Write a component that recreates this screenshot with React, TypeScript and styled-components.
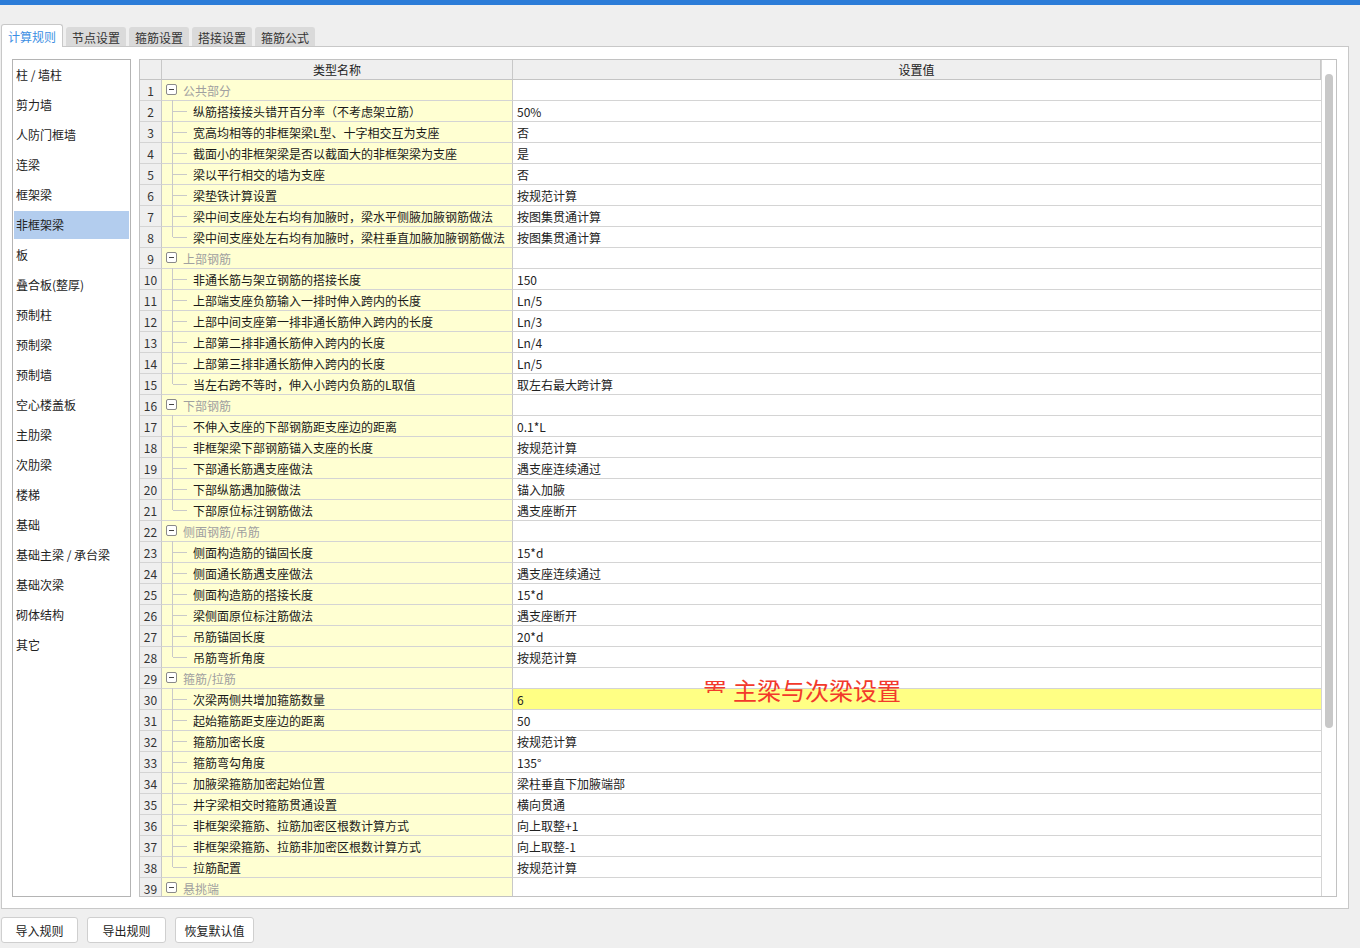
import React from 'react';
import styled, { createGlobalStyle } from 'styled-components';

const GlobalStyle = createGlobalStyle`
  html, body {
    margin: 0;
    padding: 0;
    background: #efefef;
    font-family: "Noto Sans CJK SC", "Noto Sans", sans-serif;
    font-size: 12px;
    color: #222;
  }
  * { box-sizing: border-box; }
`

type Row = { name: string; value?: string; group?: boolean; last?: boolean; hl?: boolean };

const rows: Row[] = [
  { name: '公共部分', group: true },
  { name: '纵筋搭接接头错开百分率（不考虑架立筋）', value: '50%' },
  { name: '宽高均相等的非框架梁L型、十字相交互为支座', value: '否' },
  { name: '截面小的非框架梁是否以截面大的非框架梁为支座', value: '是' },
  { name: '梁以平行相交的墙为支座', value: '否' },
  { name: '梁垫铁计算设置', value: '按规范计算' },
  { name: '梁中间支座处左右均有加腋时，梁水平侧腋加腋钢筋做法', value: '按图集贯通计算' },
  { name: '梁中间支座处左右均有加腋时，梁柱垂直加腋加腋钢筋做法', value: '按图集贯通计算', last: true },
  { name: '上部钢筋', group: true },
  { name: '非通长筋与架立钢筋的搭接长度', value: '150' },
  { name: '上部端支座负筋输入一排时伸入跨内的长度', value: 'Ln/5' },
  { name: '上部中间支座第一排非通长筋伸入跨内的长度', value: 'Ln/3' },
  { name: '上部第二排非通长筋伸入跨内的长度', value: 'Ln/4' },
  { name: '上部第三排非通长筋伸入跨内的长度', value: 'Ln/5' },
  { name: '当左右跨不等时，伸入小跨内负筋的L取值', value: '取左右最大跨计算', last: true },
  { name: '下部钢筋', group: true },
  { name: '不伸入支座的下部钢筋距支座边的距离', value: '0.1*L' },
  { name: '非框架梁下部钢筋锚入支座的长度', value: '按规范计算' },
  { name: '下部通长筋遇支座做法', value: '遇支座连续通过' },
  { name: '下部纵筋遇加腋做法', value: '锚入加腋' },
  { name: '下部原位标注钢筋做法', value: '遇支座断开', last: true },
  { name: '侧面钢筋/吊筋', group: true },
  { name: '侧面构造筋的锚固长度', value: '15*d' },
  { name: '侧面通长筋遇支座做法', value: '遇支座连续通过' },
  { name: '侧面构造筋的搭接长度', value: '15*d' },
  { name: '梁侧面原位标注筋做法', value: '遇支座断开' },
  { name: '吊筋锚固长度', value: '20*d' },
  { name: '吊筋弯折角度', value: '按规范计算', last: true },
  { name: '箍筋/拉筋', group: true },
  { name: '次梁两侧共增加箍筋数量', value: '6', hl: true },
  { name: '起始箍筋距支座边的距离', value: '50' },
  { name: '箍筋加密长度', value: '按规范计算' },
  { name: '箍筋弯勾角度', value: '135°' },
  { name: '加腋梁箍筋加密起始位置', value: '梁柱垂直下加腋端部' },
  { name: '井字梁相交时箍筋贯通设置', value: '横向贯通' },
  { name: '非框架梁箍筋、拉筋加密区根数计算方式', value: '向上取整+1' },
  { name: '非框架梁箍筋、拉筋非加密区根数计算方式', value: '向上取整-1' },
  { name: '拉筋配置', value: '按规范计算', last: true },
  { name: '悬挑端', group: true },
  { name: '', value: '' },
];

const categories = [
  '柱 / 墙柱', '剪力墙', '人防门框墙', '连梁', '框架梁', '非框架梁', '板', '叠合板(整厚)',
  '预制柱', '预制梁', '预制墙', '空心楼盖板', '主肋梁', '次肋梁', '楼梯', '基础',
  '基础主梁 / 承台梁', '基础次梁', '砌体结构', '其它',
];

const tabs = ['计算规则', '节点设置', '箍筋设置', '搭接设置', '箍筋公式'];

const buttons = [
  { label: '导入规则', width: 77 },
  { label: '导出规则', width: 79 },
  { label: '恢复默认值', width: 79 },
];

const TopBar = styled.div`
  height: 5px;
  background: #2c7cd8;
`

const TabStrip = styled.div`
  display: flex;
  align-items: flex-end;
  gap: 3px;
  padding: 0 0 0 1px;
  height: 41px;
`

const Tab = styled.div<{ $active?: boolean }>`
  height: ${p => (p.$active ? '23px' : '19px')};
  padding: 0 ${p => (p.$active ? '6px' : '5px')};
  display: flex;
  align-items: center;
  font-size: 12px;
  color: ${p => (p.$active ? '#3d8fe3' : '#333')};
  background: ${p => (p.$active ? '#fff' : '#dadada')};
  border: 1px solid ${p => (p.$active ? '#c8c8c8' : '#dadada')};
  border-bottom: none;
  border-radius: 3px 3px 0 0;
  margin-bottom: ${p => (p.$active ? '-1px' : '0')};
  position: relative;
  z-index: ${p => (p.$active ? 1 : 0)};
`

const Panel = styled.div`
  margin-left: 1px;
  width: 1348px;
  height: 863px;
  background: #fff;
  border: 1px solid #c8c8c8;
  display: flex;
  gap: 8px;
  padding: 12px 11px 11px 10px;
`

const CategoryList = styled.div`
  width: 119px;
  border: 1px solid #b4b4b4;
  padding: 1px;
  display: flex;
  flex-direction: column;
  gap: 2px;
`

const CategoryItem = styled.div<{ $selected?: boolean }>`
  height: 28px;
  line-height: 28px;
  padding-left: 2px;
  background: ${p => (p.$selected ? '#b3cdee' : 'transparent')};
  white-space: nowrap;
`

const Table = styled.div`
  flex: 1;
  border: 1px solid #c2c2c2;
  display: flex;
  position: relative;
  overflow: hidden;
`

const Grid = styled.div`
  flex: 1;
  display: grid;
  grid-template-columns: 22px 351px 1fr;
  grid-template-rows: 20px;
  grid-auto-rows: 21px;
  align-content: start;
  overflow: hidden;
`

const HeadCell = styled.div`
  background: #efefef;
  border-right: 1px solid #c8c8c8;
  border-bottom: 1px solid #c4c4c4;
  display: flex;
  align-items: center;
  justify-content: center;
  &:last-child { border-right: none; }
`

const NumCell = styled.div`
  background: #efefef;
  border-right: 1px solid #c8c8c8;
  border-bottom: 1px solid #d4d4d4;
  display: flex;
  align-items: center;
  justify-content: center;
  color: #333;
`

const NameCell = styled.div<{ $group?: boolean }>`
  position: relative;
  background: #ffffd2;
  border-right: 1px solid #c8c8c8;
  border-bottom: 1px solid #d4d4d4;
  display: flex;
  align-items: center;
  padding-left: ${p => (p.$group ? '21px' : '31px')};
  color: ${p => (p.$group ? '#a0a0a0' : '#1a1a1a')};
  white-space: nowrap;
`

const TreeLine = styled.span<{ $last?: boolean }>`
  position: absolute;
  left: 10px;
  top: -1px;
  height: ${p => (p.$last ? '11px' : '22px')};
  border-left: 1px solid #c9c9c9;
  &::after {
    content: '';
    position: absolute;
    left: 0;
    top: 11px;
    width: 14px;
    border-top: 1px solid #c9c9c9;
  }
`

const Toggle = styled.span`
  position: absolute;
  left: 4px;
  top: 4px;
  width: 11px;
  height: 11px;
  border: 1px solid #8a8a8a;
  border-radius: 2px;
  background: #fff;
  &::after {
    content: '';
    position: absolute;
    left: 2px;
    top: 4px;
    width: 5px;
    border-top: 1px solid #444;
  }
`

const ValueCell = styled.div<{ $hl?: boolean }>`
  background: ${p => (p.$hl ? '#ffff84' : '#fff')};
  border-bottom: 1px solid #d4d4d4;
  display: flex;
  align-items: center;
  padding-left: 4px;
  white-space: nowrap;
`

const ScrollTrack = styled.div`
  width: 15px;
  border-left: 1px solid #d4d4d4;
  background: #fff;
  padding: 14px 0 0 3px;
`

const ScrollThumb = styled.div`
  width: 8px;
  height: 654px;
  border-radius: 4px;
  background: #c8c8c8;
`

const Annotation = styled.div`
  position: absolute;
  left: 563px;
  top: 616px;
  font-size: 24px;
  line-height: 28px;
  color: #f2392b;
  white-space: nowrap;
  display: flex;
  align-items: flex-start;
  gap: 6px;
`

const Clipped = styled.span`
  display: inline-block;
  height: 12px;
  margin-top: 5px;
  overflow: hidden;
  & > span { display: block; margin-top: -5px; }
`

const Footer = styled.div`
  display: flex;
  gap: 9px;
  padding: 8px 0 0 1px;
`

const Button = styled.button<{ $w: number }>`
  width: ${p => p.$w}px;
  height: 26px;
  padding: 0;
  background: #fff;
  border: 1px solid #cfcfcf;
  border-radius: 3px;
  font-family: inherit;
  font-size: 12px;
  color: #222;
`

const App: React.FC = () => {
  return (
    <>
      <GlobalStyle />
      <TopBar />
      <TabStrip>
        {tabs.map((t, i) => (
          <Tab key={t} $active={i === 0}>{t}</Tab>
        ))}
      </TabStrip>
      <Panel>
        <CategoryList>
          {categories.map(c => (
            <CategoryItem key={c} $selected={c === '非框架梁'}>{c}</CategoryItem>
          ))}
        </CategoryList>
        <Table>
          <Grid>
            <HeadCell />
            <HeadCell>类型名称</HeadCell>
            <HeadCell>设置值</HeadCell>
            {rows.map((r, i) => (
              <React.Fragment key={i}>
                <NumCell>{i + 1}</NumCell>
                <NameCell $group={r.group}>
                  {r.group ? <Toggle /> : <TreeLine $last={r.last} />}
                  {r.name}
                </NameCell>
                <ValueCell $hl={r.hl}>{r.value}</ValueCell>
              </React.Fragment>
            ))}
          </Grid>
          <ScrollTrack>
            <ScrollThumb />
          </ScrollTrack>
          <Annotation>
            <Clipped><span>置</span></Clipped>
            <span>主梁与次梁设置</span>
          </Annotation>
        </Table>
      </Panel>
      <Footer>
        {buttons.map(b => (
          <Button key={b.label} $w={b.width}>{b.label}</Button>
        ))}
      </Footer>
    </>
  );
}

export default App;
